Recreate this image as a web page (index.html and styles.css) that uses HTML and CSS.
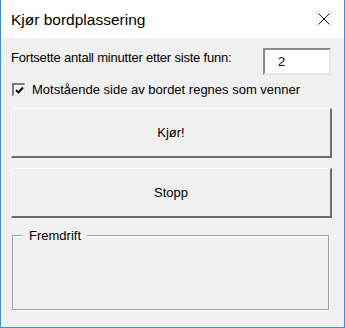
FILE: index.html
```html
<!DOCTYPE html>
<html lang="no">
<head>
    <meta charset="UTF-8">
    <title>Kjør bordplassering</title>
    <link rel="stylesheet" href="styles.css">
</head>
<body>

<div class="window">
    <div class="titlebar">
        <span class="title">Kjør bordplassering</span>
        <svg class="close" width="12" height="12" viewBox="0 0 12 12">
            <path d="M0.5 0.5 L11.5 11.5 M11.5 0.5 L0.5 11.5" stroke="#111" stroke-width="1" fill="none"/>
        </svg>
    </div>

    <div class="content">
        <div class="row">
            <span class="label tight">Fortsette antall minutter etter siste funn:</span>
            <div class="textbox">2</div>
        </div>

        <div class="check-row">
            <span class="checkbox">
                <svg width="9" height="9" viewBox="0 0 9 9">
                    <path d="M1 4 L3.5 6.5 L8 1.5" stroke="#000" stroke-width="2" fill="none"/>
                </svg>
            </span>
            <span class="label">Motstående side av bordet regnes som venner</span>
        </div>

        <button class="btn">Kjør!</button>
        <button class="btn">Stopp</button>

        <fieldset class="frame">
            <legend>Fremdrift</legend>
        </fieldset>
    </div>
</div>

</body>
</html>
```

FILE: styles.css
```css
body {
    margin: 0;
    background: #f0f0f0;
    font-family: 'Liberation Sans', Arial, sans-serif;
}

.window {
    width: 345px;
    height: 328px;
    box-sizing: border-box;
    border: 1px solid #3d8fdc;
    border-top: none;
    background: #f0f0f0;
    display: flex;
    flex-direction: column;
}

.titlebar {
    height: 38px;
    background: #fff;
    display: flex;
    align-items: center;
    justify-content: space-between;
    padding: 0 14px 0 10px;
}

.title {
    font-family: 'Liberation Sans', Arial, sans-serif;
    font-size: 15.5px;
    color: #000;
    padding-top: 1px;
}

.content {
    padding: 10px 13px 0 10px;
    display: flex;
    flex-direction: column;
}

.row {
    display: flex;
    justify-content: space-between;
    align-items: flex-start;
    height: 27px;
}

.label {
    font-size: 13px;
    color: #000;
    padding-top: 2px;
}

.label.tight {
    letter-spacing: -0.2px;
}

.textbox {
    width: 68px;
    height: 27px;
    box-sizing: border-box;
    background: #fff;
    border-top: 2px solid #8a8a8a;
    border-left: 2px solid #8a8a8a;
    border-right: 2px solid #e6e6e6;
    border-bottom: 2px solid #e6e6e6;
    font-size: 13px;
    line-height: 23px;
    padding-left: 13px;
}

.check-row {
    display: flex;
    align-items: center;
    gap: 7px;
    margin-top: 7px;
    padding-left: 1px;
}

.checkbox {
    width: 13px;
    height: 13px;
    box-sizing: border-box;
    background: #fff;
    border-top: 2px solid #7a7a7a;
    border-left: 2px solid #7a7a7a;
    border-right: 1px solid #e3e3e3;
    border-bottom: 1px solid #e3e3e3;
    display: flex;
    align-items: center;
    justify-content: center;
}

.check-row .label {
    padding-top: 0;
}

.btn {
    width: 321px;
    height: 50px;
    margin-top: 11px;
    background: #f0f0f0;
    border-top: 1px solid #fff;
    border-left: 1px solid #fff;
    border-right: 2px solid #6d6d6d;
    border-bottom: 2px solid #6d6d6d;
    font-family: 'Liberation Sans', Arial, sans-serif;
    font-size: 13px;
    color: #000;
    padding: 0;
}

.btn + .btn {
    margin-top: 10px;
}

.frame {
    margin: 10px 2px 0 1px;
    height: 82px;
    box-sizing: border-box;
    border: 1px solid #a0a0a0;
    box-shadow: inset 1px 1px 0 #fff, 1px 1px 0 #fff;
    padding: 0;
}

.frame legend {
    font-size: 13px;
    margin-left: 10px;
    padding: 0 6px;
}
```
